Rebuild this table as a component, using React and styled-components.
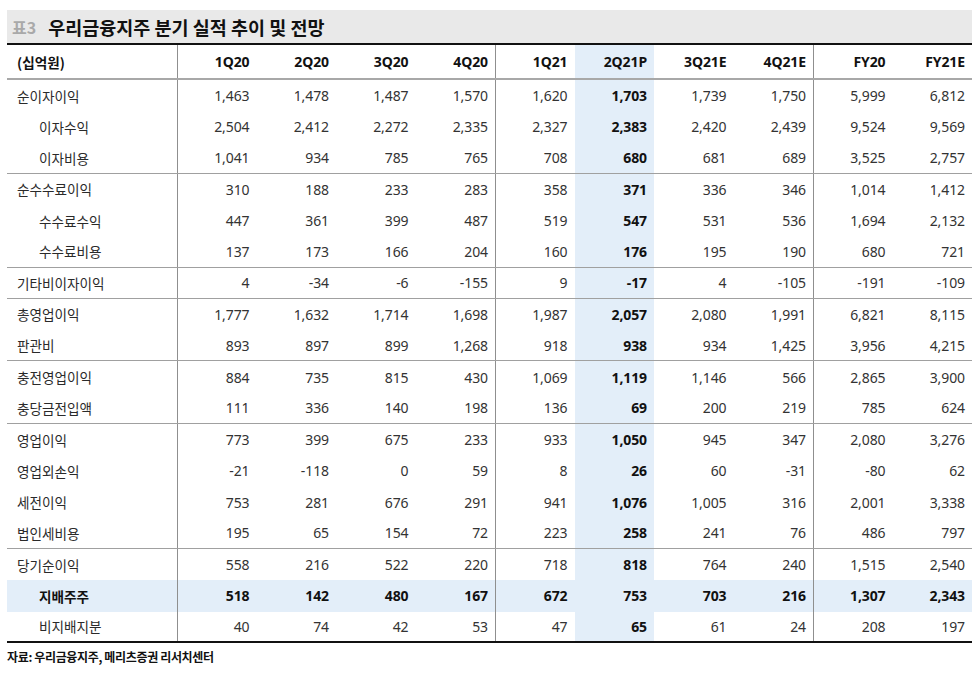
import React from 'react';
import styled, { createGlobalStyle, css } from 'styled-components';

const Global = createGlobalStyle`
  html, body { margin: 0; padding: 0; background: #fff; }
  body { font-family: "Noto Sans", "Noto Sans CJK KR", sans-serif; }
`;

const Page = styled.div`
  padding: 10px 0 0 7px;
  width: 965px;
`;

const TitleBar = styled.div`
  height: 33px;
  background: #e9e9e9;
  border-bottom: 2px solid #111;
  display: flex;
  align-items: center;
  gap: 12px;
  padding-left: 5px;
  font-family: "Noto Sans CJK KR", sans-serif;
  font-weight: 700;
`;

const TableNo = styled.span`
  color: #a9a9a9;
  font-size: 16px;
`;

const TitleText = styled.span`
  color: #111;
  font-size: 18.5px;
`;

const Row = styled.div`
  display: grid;
  grid-template-columns: 170px repeat(10, 1fr);
  box-sizing: border-box;
  height: ${p => (p.$header ? '35px' : '31.28px')};
  background: ${p => (p.$shade ? '#e3eef9' : 'transparent')};
  ${p => p.$header && css`border-bottom: 2px solid #a8a8a8;`}
  ${p => p.$groupEnd && css`border-bottom: 1px solid #a0a0a0;`}
  ${p => p.$last && css`border-bottom: 2px solid #111;`}
`;

const Label = styled.div`
  display: flex;
  align-items: center;
  padding-left: ${p => (p.$indent ? '32px' : '10px')};
  font-family: "Noto Sans CJK KR", sans-serif;
  font-size: 13.6px;
  font-weight: ${p => (p.$bold ? 700 : 400)};
  color: ${p => (p.$bold ? '#111' : '#2a2a2a')};
  white-space: nowrap;
`;

const Cell = styled.div`
  display: flex;
  align-items: center;
  justify-content: flex-end;
  box-sizing: border-box;
  padding-right: 7px;
  font-size: 14px;
  letter-spacing: -0.1px;
  font-weight: ${p => (p.$bold ? 700 : 400)};
  color: ${p => (p.$bold ? '#111' : '#333')};
  background: ${p => (p.$hl ? '#e3eef9' : 'transparent')};
  ${p => p.$divider && css`border-left: 1px solid #8f8f8f;`}
`;

const Source = styled.div`
  margin-top: 5px;
  font-family: "Noto Sans CJK KR", sans-serif;
  font-size: 12px;
  letter-spacing: -0.35px;
  font-weight: 700;
  color: #111;
  line-height: 18px;
`;

const cols = ['1Q20', '2Q20', '3Q20', '4Q20', '1Q21', '2Q21P', '3Q21E', '4Q21E', 'FY20', 'FY21E'];
const HL = 5;
const DIVIDERS = [0, 4, 8];

const rows = [
  { l: '순이자이익', v: ['1,463', '1,478', '1,487', '1,570', '1,620', '1,703', '1,739', '1,750', '5,999', '6,812'] },
  { l: '이자수익', i: true, v: ['2,504', '2,412', '2,272', '2,335', '2,327', '2,383', '2,420', '2,439', '9,524', '9,569'] },
  { l: '이자비용', i: true, g: true, v: ['1,041', '934', '785', '765', '708', '680', '681', '689', '3,525', '2,757'] },
  { l: '순수수료이익', v: ['310', '188', '233', '283', '358', '371', '336', '346', '1,014', '1,412'] },
  { l: '수수료수익', i: true, v: ['447', '361', '399', '487', '519', '547', '531', '536', '1,694', '2,132'] },
  { l: '수수료비용', i: true, g: true, v: ['137', '173', '166', '204', '160', '176', '195', '190', '680', '721'] },
  { l: '기타비이자이익', g: true, v: ['4', '-34', '-6', '-155', '9', '-17', '4', '-105', '-191', '-109'] },
  { l: '총영업이익', v: ['1,777', '1,632', '1,714', '1,698', '1,987', '2,057', '2,080', '1,991', '6,821', '8,115'] },
  { l: '판관비', g: true, v: ['893', '897', '899', '1,268', '918', '938', '934', '1,425', '3,956', '4,215'] },
  { l: '충전영업이익', v: ['884', '735', '815', '430', '1,069', '1,119', '1,146', '566', '2,865', '3,900'] },
  { l: '충당금전입액', g: true, v: ['111', '336', '140', '198', '136', '69', '200', '219', '785', '624'] },
  { l: '영업이익', v: ['773', '399', '675', '233', '933', '1,050', '945', '347', '2,080', '3,276'] },
  { l: '영업외손익', v: ['-21', '-118', '0', '59', '8', '26', '60', '-31', '-80', '62'] },
  { l: '세전이익', v: ['753', '281', '676', '291', '941', '1,076', '1,005', '316', '2,001', '3,338'] },
  { l: '법인세비용', g: true, v: ['195', '65', '154', '72', '223', '258', '241', '76', '486', '797'] },
  { l: '당기순이익', v: ['558', '216', '522', '220', '718', '818', '764', '240', '1,515', '2,540'] },
  { l: '지배주주', i: true, s: true, v: ['518', '142', '480', '167', '672', '753', '703', '216', '1,307', '2,343'] },
  { l: '비지배지분', i: true, v: ['40', '74', '42', '53', '47', '65', '61', '24', '208', '197'] },
];

export default function App() {
  return (
    <Page>
      <Global />
      <TitleBar>
        <TableNo>표3</TableNo>
        <TitleText>우리금융지주 분기 실적 추이 및 전망</TitleText>
      </TitleBar>
      <Row $header>
        <Label $bold>(십억원)</Label>
        {cols.map((c, k) => (
          <Cell key={c} $bold $hl={k === HL} $divider={DIVIDERS.includes(k)}>{c}</Cell>
        ))}
      </Row>
      {rows.map((r, idx) => (
        <Row key={r.l} $shade={r.s} $groupEnd={r.g} $last={idx === rows.length - 1}>
          <Label $indent={r.i} $bold={r.s}>{r.l}</Label>
          {r.v.map((v, k) => (
            <Cell key={k} $bold={r.s || k === HL} $hl={k === HL && !r.s} $divider={DIVIDERS.includes(k)}>{v}</Cell>
          ))}
        </Row>
      ))}
      <Source>자료: 우리금융지주, 메리츠증권 리서치센터</Source>
    </Page>
  );
}
